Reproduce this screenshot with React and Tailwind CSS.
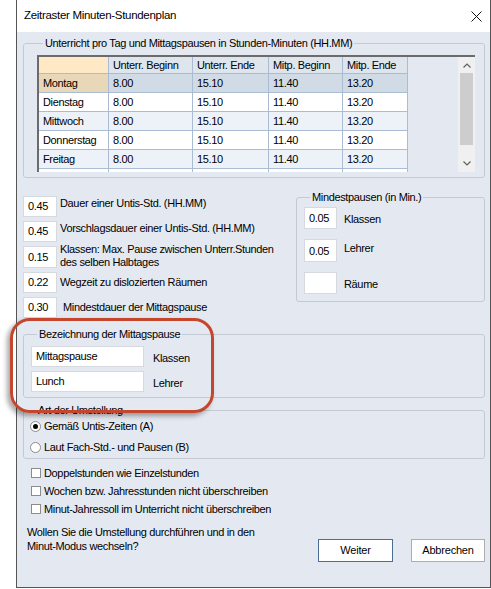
import React from "react";

const COLS = [
  { key: "day", title: "", w: "w-[70px]" },
  { key: "ub", title: "Unterr. Beginn", w: "w-[84px]" },
  { key: "ue", title: "Unterr. Ende", w: "w-[76px]" },
  { key: "mb", title: "Mitp. Beginn", w: "w-[74px]" },
  { key: "me", title: "Mitp. Ende", w: "w-[65px]" },
];

const ROWS = [
  { day: "Montag", sel: true },
  { day: "Dienstag" },
  { day: "Mittwoch", alt: true },
  { day: "Donnerstag" },
  { day: "Freitag", alt: true },
];

function Box({ value, className = "" }) {
  return (
    <div
      className={`shrink-0 border border-[#d6d9de] bg-white pl-[4px] leading-[19px] ${className}`}
    >
      {value}
    </div>
  );
}

function Group({ title, className = "", children }) {
  return (
    <fieldset
      className={`rounded-[3px] border border-[#c4cad4] ${className}`}
    >
      <legend className="ml-[6px] px-[2px] leading-[13px]">{title}</legend>
      {children}
    </fieldset>
  );
}

function Chevron({ up }) {
  return (
    <svg width="8" height="5" viewBox="0 0 8 5">
      <polyline
        points={up ? "0.5,4.5 4,1 7.5,4.5" : "0.5,0.5 4,4 7.5,0.5"}
        fill="none"
        stroke="#606060"
        strokeWidth="1.2"
      />
    </svg>
  );
}

function Grid() {
  return (
    <div className="flex h-[117px] border-l-2 border-t-2 border-[#6b6b6b]">
      <div className="flex-1 overflow-hidden">
        <div className="flex h-[17px]">
          {COLS.map((c, i) => (
            <div
              key={c.key}
              className={`${c.w} shrink-0 border-b border-r border-[#a9bcd4] pl-[4px] leading-[16px] ${
                i === 0 ? "bg-[#ffe8c6]" : "bg-[#dfe5ed]"
              }`}
            >
              {c.title}
            </div>
          ))}
        </div>
        {ROWS.map((r) => (
          <div key={r.day} className="flex h-[19px]">
            <div
              className={`w-[70px] shrink-0 border-b border-r border-[#a9bcd4] pl-[4px] leading-[18px] ${
                r.sel ? "bg-[#e8d8b9]" : r.alt ? "bg-[#edf2f8]" : "bg-white"
              }`}
            >
              {r.day}
            </div>
            {["8.00", "15.10", "11.40", "13.20"].map((v, i) => (
              <div
                key={i}
                className={`${COLS[i + 1].w} shrink-0 border-b border-r border-[#a9bcd4] pl-[4px] leading-[18px] ${
                  r.sel ? "bg-[#d1dbe6]" : r.alt ? "bg-[#edf2f8]" : "bg-white"
                }`}
              >
                {v}
              </div>
            ))}
          </div>
        ))}
        {/* next row, cut off by the grid frame */}
        <div className="flex h-[19px]">
          {COLS.map((c) => (
            <div key={c.key} className={`${c.w} shrink-0 border-r border-[#a9bcd4] bg-white`} />
          ))}
        </div>
      </div>
      <div className="flex w-[17px] shrink-0 flex-col bg-[#f0f0f0]">
        <div className="flex h-[16px] items-center justify-center">
          <Chevron up />
        </div>
        <div className="mx-[2px] h-[72px] bg-[#cdcdcd]" />
        <div className="flex-1" />
        <div className="flex h-[17px] items-center justify-center">
          <Chevron />
        </div>
      </div>
    </div>
  );
}

export default function App() {
  return (
    <div className="relative flex h-[589px] w-[491px] bg-white pl-[16px] font-['Liberation_Sans',Arial,sans-serif] text-[11px] tracking-[-0.35px] text-black">
      <div className="flex h-[588px] w-[475px] flex-col border-b border-l border-r border-[#555]">
        <div className="flex h-[32px] shrink-0 items-center justify-between bg-white pl-[7px] pr-[8px] text-[11.5px] tracking-[-0.3px]">
          <span>Zeitraster Minuten-Stundenplan</span>
          <svg width="11" height="11" viewBox="0 0 11 11">
            <path d="M0.5 0.5L10.5 10.5M10.5 0.5L0.5 10.5" stroke="#111" strokeWidth="1" />
          </svg>
        </div>

        <div className="flex flex-1 flex-col bg-[#e4e9f1] pl-[6px] pr-[5px] pt-[5px]">
          <Group
            title="Unterricht pro Tag und Mittagspausen in Stunden-Minuten (HH.MM)"
            className="pb-[5px] pl-[13px] pr-[9px] pt-[5px]"
          >
            <Grid />
          </Group>

          <div className="mt-[13px] flex">
            <div className="flex w-[273px] shrink-0 flex-col gap-[4px] pt-[5px]">
              <div className="flex h-[21px] items-start gap-[3px]">
                <Box value="0.45" className="h-[21px] w-[34px]" />
                <span className="leading-[14px]">Dauer einer Untis-Std. (HH.MM)</span>
              </div>
              <div className="flex h-[21px] items-start gap-[3px]">
                <Box value="0.45" className="h-[21px] w-[34px]" />
                <span className="leading-[14px]">Vorschlagsdauer einer Untis-Std. (HH.MM)</span>
              </div>
              <div className="flex h-[22px] items-start gap-[3px]">
                <Box value="0.15" className="h-[22px] w-[34px] leading-[20px]" />
                <span className="mt-[-3px] leading-[13px]">
                  Klassen: Max. Pause zwischen Unterr.Stunden
                  <br />
                  des selben Halbtages
                </span>
              </div>
              <div className="flex h-[21px] items-center gap-[3px]">
                <Box value="0.22" className="h-[21px] w-[34px]" />
                <span>Wegzeit zu dislozierten Räumen</span>
              </div>
              <div className="flex h-[21px] items-center gap-[3px]">
                <Box value="0.30" className="h-[21px] w-[34px]" />
                <span className="pl-[3px]">Mindestdauer der Mittagspause</span>
              </div>
            </div>

            <Group
              title="Mindestpausen (in Min.)"
              className="flex-1 self-start pb-[7px] pl-[7px] pt-[3px]"
            >
              <div className="flex flex-col gap-[10px]">
                <div className="flex items-center gap-[7px]">
                  <Box value="0.05" className="h-[22px] w-[33px] leading-[20px]" />
                  <span className="mt-[3px]">Klassen</span>
                </div>
                <div className="flex items-center gap-[7px]">
                  <Box value="0.05" className="h-[23px] w-[33px] leading-[22px]" />
                  <span className="mt-[-5px]">Lehrer</span>
                </div>
                <div className="flex items-center gap-[7px]">
                  <Box value="" className="h-[22px] w-[33px]" />
                  <span className="mt-[3px]">Räume</span>
                </div>
              </div>
            </Group>
          </div>

          <Group
            title="Bezeichnung der Mittagspause"
            className="mt-[10px] pb-[5px] pl-[7px] pt-[5px]"
          >
            <div className="flex flex-col gap-[4px]">
              <div className="flex items-center gap-[9px]">
                <Box value="Mittagspause" className="h-[21px] w-[113px]" />
                <span className="mt-[3px]">Klassen</span>
              </div>
              <div className="flex items-center gap-[9px]">
                <Box value="Lunch" className="h-[21px] w-[113px]" />
                <span className="mt-[3px]">Lehrer</span>
              </div>
            </div>
          </Group>

          <Group title="Art der Umstellung" className="mt-[6px] pb-[4px] pl-[6px] pt-[2px]">
            <div className="flex flex-col gap-[7px]">
              <div className="flex h-[14px] items-center gap-[3px]">
                <span className="flex h-[11px] w-[11px] items-center justify-center rounded-full border border-[#8c8c8c] bg-white">
                  <span className="h-[5px] w-[5px] rounded-full bg-black" />
                </span>
                <span>Gemäß Untis-Zeiten (A)</span>
              </div>
              <div className="flex h-[14px] items-center gap-[3px]">
                <span className="h-[11px] w-[11px] rounded-full border border-[#8c8c8c] bg-white" />
                <span>Laut Fach-Std.- und Pausen (B)</span>
              </div>
            </div>
          </Group>

          <div className="mt-[7px] flex flex-col gap-[4px] pl-[8px]">
            {[
              "Doppelstunden wie Einzelstunden",
              "Wochen bzw. Jahresstunden nicht überschreiben",
              "Minut-Jahressoll im Unterricht nicht überschreiben",
            ].map((t) => (
              <div key={t} className="flex h-[14px] items-center gap-[3px]">
                <span className="h-[10px] w-[10px] border border-[#8c8c8c] bg-white" />
                <span>{t}</span>
              </div>
            ))}
          </div>

          <div className="mt-[9px] flex justify-between">
            <p className="pl-[4px] leading-[14px]">
              Wollen Sie die Umstellung durchführen und in den
              <br />
              Minut-Modus wechseln?
            </p>
            <div className="flex gap-[18px] pt-[14px]">
              <button className="h-[23px] w-[75px] border border-[#4e6d94] bg-white text-[11px] tracking-[-0.2px]">
                Weiter
              </button>
              <button className="h-[23px] w-[74px] border border-[#adadad] bg-white text-[11px] tracking-[-0.2px]">
                Abbrechen
              </button>
            </div>
          </div>
        </div>
      </div>

      <div className="pointer-events-none absolute left-[10px] top-[318px] h-[95px] w-[204px] rounded-[20px] border-[3px] border-[#c4472d] shadow-[-3px_3px_5px_rgba(0,0,0,0.35)]" />
    </div>
  );
}
